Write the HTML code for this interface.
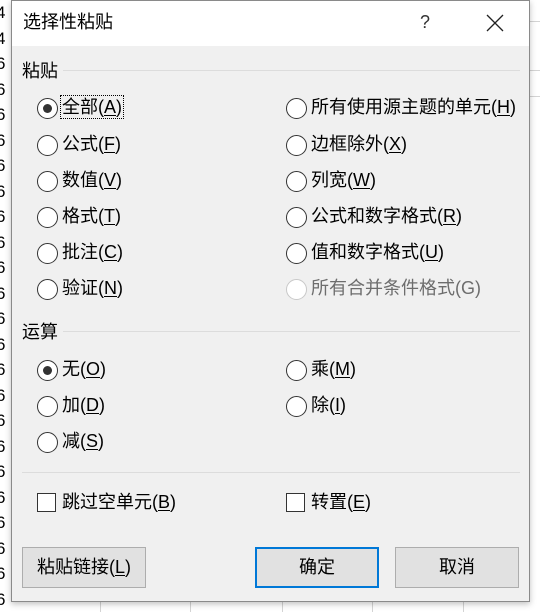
<!DOCTYPE html>
<html><head><meta charset="utf-8">
<style>
*{margin:0;padding:0;box-sizing:border-box}
body{width:540px;height:612px;overflow:hidden;background:#fff;position:relative;font-family:"Liberation Sans","Noto Sans CJK SC","Microsoft YaHei",sans-serif;color:#000}
.a{position:absolute}
.dlg{left:11px;top:0;width:519px;height:602px;background:#f0f0f0;border:1px solid #8a8a8a;box-shadow:0 2px 6px rgba(0,0,0,.25)}
.title{left:12px;top:1px;width:517px;height:45px;background:#fff}
.t{font-size:18px;line-height:20px;white-space:nowrap;margin-top:-1px}
.r{width:21px;height:21px;border:1.5px solid #333;border-radius:50%;background:#fff}
.r.on::after{content:"";position:absolute;left:4.5px;top:4.5px;width:9px;height:9px;border-radius:50%;background:#333}
.r.dis{border-color:#c8c8c8}
.cb{width:19px;height:19px;border:1.5px solid #333;background:#fff}
.sep{height:1px;background:#dcdcdc}
.btn{height:41px;border:1px solid #adadad;background:#e1e1e1;font-size:18px;text-align:center;line-height:39px}
u{text-decoration:underline;text-underline-offset:2px}
.vl{width:1px;background:#d4d4d4}
.hl{height:1px;background:#d4d4d4}
</style></head><body>
<div class="a vl" style="left:100px;top:600px;height:12px"></div>
<div class="a vl" style="left:190px;top:600px;height:12px"></div>
<div class="a vl" style="left:282px;top:600px;height:12px"></div>
<div class="a vl" style="left:372px;top:600px;height:12px"></div>
<div class="a vl" style="left:463px;top:600px;height:12px"></div>
<div class="a hl" style="left:530px;top:21px;width:10px"></div>
<div class="a hl" style="left:530px;top:70px;width:10px"></div>
<div class="a hl" style="left:530px;top:96px;width:10px"></div>
<div class="a" style="left:-4px;top:0;width:14px;height:612px;font-size:17px;line-height:25.5px;color:#000;overflow:hidden">4<br>4<br>6<br>6<br>6<br>6<br>6<br>6<br>6<br>6<br>6<br>6<br>6<br>6<br>6<br>6<br>6<br>6<br>6<br>6<br>6<br>6<br>6<br>6</div>

<div class="a dlg"></div>
<div class="a title"></div>
<div class="a t" style="left:23px;top:13px;font-size:18px">选择性粘贴</div>
<div class="a t" style="left:420px;top:13px;font-size:18px;color:#333">?</div>
<svg class="a" style="left:486px;top:14px" width="18" height="18" viewBox="0 0 18 18"><path d="M1 1L17 17M17 1L1 17" stroke="#222" stroke-width="1.3"/></svg>

<div class="a t" style="left:22px;top:62px">粘贴</div>
<div class="a sep" style="left:63px;top:70px;width:457px"></div>

<div class="a r on" style="left:37px;top:98px"></div><div class="a t" style="left:62px;top:98px;outline:1px dotted #000;outline-offset:1px">全部(<u>A</u>)</div>
<div class="a r" style="left:37px;top:135px"></div><div class="a t" style="left:62px;top:135px">公式(<u>F</u>)</div>
<div class="a r" style="left:37px;top:171px"></div><div class="a t" style="left:62px;top:171px">数值(<u>V</u>)</div>
<div class="a r" style="left:37px;top:207px"></div><div class="a t" style="left:62px;top:207px">格式(<u>T</u>)</div>
<div class="a r" style="left:37px;top:243px"></div><div class="a t" style="left:62px;top:243px">批注(<u>C</u>)</div>
<div class="a r" style="left:37px;top:279px"></div><div class="a t" style="left:62px;top:279px">验证(<u>N</u>)</div>

<div class="a r" style="left:286px;top:98px"></div><div class="a t" style="left:311px;top:98px">所有使用源主题的单元(<u>H</u>)</div>
<div class="a r" style="left:286px;top:135px"></div><div class="a t" style="left:311px;top:135px">边框除外(<u>X</u>)</div>
<div class="a r" style="left:286px;top:171px"></div><div class="a t" style="left:311px;top:171px">列宽(<u>W</u>)</div>
<div class="a r" style="left:286px;top:207px"></div><div class="a t" style="left:311px;top:207px">公式和数字格式(<u>R</u>)</div>
<div class="a r" style="left:286px;top:243px"></div><div class="a t" style="left:311px;top:243px">值和数字格式(<u>U</u>)</div>
<div class="a r dis" style="left:286px;top:279px"></div><div class="a t" style="left:311px;top:279px;color:#6d6d6d">所有合并条件格式(G)</div>

<div class="a t" style="left:22px;top:323px">运算</div>
<div class="a sep" style="left:63px;top:331px;width:457px"></div>
<div class="a r on" style="left:37px;top:360px"></div><div class="a t" style="left:62px;top:360px">无(<u>O</u>)</div>
<div class="a r" style="left:37px;top:396px"></div><div class="a t" style="left:62px;top:396px">加(<u>D</u>)</div>
<div class="a r" style="left:37px;top:432px"></div><div class="a t" style="left:62px;top:432px">减(<u>S</u>)</div>
<div class="a r" style="left:286px;top:360px"></div><div class="a t" style="left:311px;top:360px">乘(<u>M</u>)</div>
<div class="a r" style="left:286px;top:396px"></div><div class="a t" style="left:311px;top:396px">除(<u>I</u>)</div>

<div class="a sep" style="left:22px;top:472px;width:498px"></div>
<div class="a cb" style="left:37px;top:493px"></div><div class="a t" style="left:62px;top:493px">跳过空单元(<u>B</u>)</div>
<div class="a cb" style="left:286px;top:493px"></div><div class="a t" style="left:311px;top:493px">转置(<u>E</u>)</div>

<div class="a btn" style="left:22px;top:547px;width:124px">粘贴链接(<u>L</u>)</div>
<div class="a btn" style="left:255px;top:547px;width:124px;border:2px solid #0078d7;line-height:37px">确定</div>
<div class="a btn" style="left:395px;top:547px;width:124px">取消</div>
</body></html>
